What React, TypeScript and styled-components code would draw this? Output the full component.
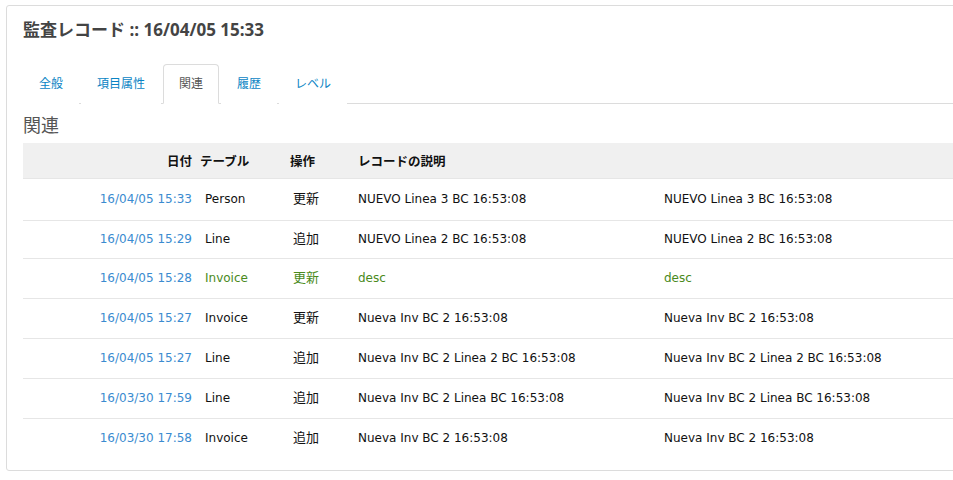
import React from "react";
import styled, { createGlobalStyle } from "styled-components";

const Global = createGlobalStyle`
  html, body { margin: 0; padding: 0; background: #fff; overflow: hidden; }
  body { font-family: "DejaVu Sans", "Noto Sans CJK JP", sans-serif; }
  *, *::before, *::after { box-sizing: border-box; }
`;

const Panel = styled.div`
  margin: 5px 0 0 6px;
  width: 980px;
  border: 1px solid #dcdcdc;
  border-radius: 3px;
  padding: 13px 0 12px 16px;
`;

const Title = styled.h1`
  margin: 0;
  font-family: "Open Sans", "Noto Sans CJK JP", sans-serif;
  font-size: 17px;
  line-height: 22px;
  font-weight: 700;
  color: #444;
`;

const TabBar = styled.ul`
  list-style: none;
  margin: 23px 0 0 0;
  padding: 0;
  display: flex;
  gap: 2px;
  border-bottom: 1px solid #dcdcdc;
`;

const Tab = styled.li<{ $active?: boolean }>`
  margin-bottom: -1px;
  padding: 9px 15px 11px;
  font-family: "Noto Sans CJK JP", sans-serif;
  font-size: 12px;
  line-height: 18px;
  color: ${(p) => (p.$active ? "#555" : "#0a84c4")};
  background: #fff;
  border: 1px solid ${(p) => (p.$active ? "#dcdcdc" : "transparent")};
  border-bottom-color: ${(p) => (p.$active ? "#fff" : "transparent")};
  border-radius: 4px 4px 0 0;
`;

const Section = styled.h2`
  margin: 8px 0 7px 0;
  font-family: "Noto Sans CJK JP", sans-serif;
  font-size: 18px;
  line-height: 24px;
  font-weight: 400;
  color: #555;
`;

const Table = styled.table`
  width: 100%;
  border-collapse: collapse;
  table-layout: fixed;
  font-size: 12px;
`;

const Th = styled.th<{ $w?: number; $align?: string }>`
  ${(p) => (p.$w ? `width: ${p.$w}px;` : "")}
  height: 35px;
  padding: 0 8px 0 0;
  text-align: ${(p) => p.$align ?? "left"};
  background: #f0f0f0;
  color: #111;
  font-weight: 700;
  font-family: "Noto Sans CJK JP", sans-serif;
  font-size: 12.5px;
  border-bottom: 1px solid #e6e6e6;
`;

const Row = styled.tr<{ $h: number; $last?: boolean }>`
  height: ${(p) => p.$h}px;
  border-bottom: ${(p) => (p.$last ? "none" : "1px solid #e6e6e6")};
`;

const DateCell = styled.td`
  text-align: right;
  padding: 0 8px 0 0;
  color: #3a8bd0;
  white-space: nowrap;
`;

const Cell = styled.td<{ $green?: boolean; $pl?: number; $cjk?: boolean }>`
  padding: 0 0 0 ${(p) => p.$pl ?? 0}px;
  color: ${(p) => (p.$green ? "#4a8a1c" : "#111")};
  white-space: nowrap;
  ${(p) =>
    p.$cjk
      ? `font-family: "Noto Sans CJK JP", sans-serif; font-size: 13px; line-height: 16px; padding-bottom: 3px;`
      : ""}
`;

type Rec = { d: string; t: string; op: string; desc: string; green?: boolean; h: number };

const rows: Rec[] = [
  { d: "16/04/05 15:33", t: "Person", op: "更新", desc: "NUEVO Linea 3 BC 16:53:08", h: 42 },
  { d: "16/04/05 15:29", t: "Line", op: "追加", desc: "NUEVO Linea 2 BC 16:53:08", h: 38 },
  { d: "16/04/05 15:28", t: "Invoice", op: "更新", desc: "desc", green: true, h: 40 },
  { d: "16/04/05 15:27", t: "Invoice", op: "更新", desc: "Nueva Inv BC 2 16:53:08", h: 40 },
  { d: "16/04/05 15:27", t: "Line", op: "追加", desc: "Nueva Inv BC 2 Linea 2 BC 16:53:08", h: 40 },
  { d: "16/03/30 17:59", t: "Line", op: "追加", desc: "Nueva Inv BC 2 Linea BC 16:53:08", h: 40 },
  { d: "16/03/30 17:58", t: "Invoice", op: "追加", desc: "Nueva Inv BC 2 16:53:08", h: 40 },
];

export default function App() {
  return (
    <>
      <Global />
      <Panel>
        <Title>監査レコード :: 16/04/05 15:33</Title>
        <TabBar>
          <Tab>全般</Tab>
          <Tab>項目属性</Tab>
          <Tab $active>関連</Tab>
          <Tab>履歴</Tab>
          <Tab>レベル</Tab>
        </TabBar>
        <Section>関連</Section>
        <Table>
          <thead>
            <tr>
              <Th $w={177} $align="right">日付</Th>
              <Th $w={90}>テーブル</Th>
              <Th $w={68}>操作</Th>
              <Th $w={306}>レコードの説明</Th>
              <Th></Th>
            </tr>
          </thead>
          <tbody>
            {rows.map((r, i) => (
              <Row key={i} $h={r.h} $last={i === rows.length - 1}>
                <DateCell>{r.d}</DateCell>
                <Cell $green={r.green} $pl={5}>{r.t}</Cell>
                <Cell $green={r.green} $pl={3} $cjk>{r.op}</Cell>
                <Cell $green={r.green}>{r.desc}</Cell>
                <Cell $green={r.green}>{r.desc}</Cell>
              </Row>
            ))}
          </tbody>
        </Table>
      </Panel>
    </>
  );
}
